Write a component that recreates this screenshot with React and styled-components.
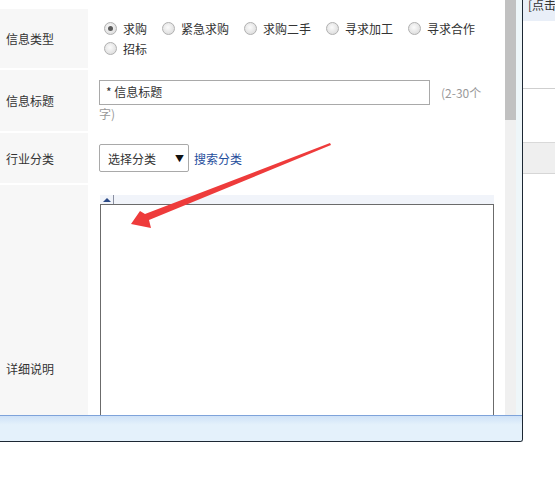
import React from "react";
import styled, { createGlobalStyle } from "styled-components";

const GlobalStyle = createGlobalStyle`
  html, body {
    margin: 0;
    padding: 0;
    background: #ffffff;
  }
  body {
    font-family: "Microsoft YaHei", "Noto Sans CJK SC", "Liberation Sans", sans-serif;
    font-size: 12px;
    color: #333333;
  }
`;

const Page = styled.div`
  position: relative;
  width: 555px;
  height: 501px;
  overflow: hidden;
  display: flex;
  align-items: flex-start;
`;

const Dialog = styled.div`
  width: 523px;
  height: 442px;
  display: flex;
  flex-direction: column;
  border-right: 1px solid #1c2733;
  border-bottom: 1px solid #1c2733;
  border-bottom-right-radius: 3px;
  box-sizing: border-box;
  overflow: hidden;
  flex-shrink: 0;
`;

const Body = styled.div`
  height: 415px;
  display: flex;
  overflow: hidden;
`;

const FormArea = styled.div`
  width: 505px;
  padding-top: 9px;
  display: grid;
  grid-template-columns: 88px 1fr;
  grid-auto-rows: min-content;
  row-gap: 2px;
  align-content: start;
`;

const Label = styled.div`
  background: #f7f7f7;
  height: ${(p) => p.h}px;
  display: flex;
  align-items: ${(p) => (p.bottom ? "flex-end" : "center")};
  padding-left: 6px;
  padding-bottom: ${(p) => (p.bottom ? "48px" : "0")};
  box-sizing: border-box;
  color: #333;
`;

const Cell = styled.div`
  padding: ${(p) => p.pad || "0 0 0 11px"};
  box-sizing: border-box;
  height: ${(p) => p.h}px;
`;

const RadioLine = styled.div`
  display: flex;
  align-items: center;
  height: 20px;
  padding-left: 5px;
`;

const RadioItem = styled.label`
  display: flex;
  align-items: center;
  margin-right: 15px;
  white-space: nowrap;
`;

const RadioDot = styled.span`
  width: 11px;
  height: 11px;
  border-radius: 50%;
  border: 1px solid #b0b0b0;
  background: radial-gradient(circle at 45% 40%, #fbfbfb 0%, #d6d6d6 100%);
  margin-right: 6px;
  position: relative;
  flex-shrink: 0;
  &::after {
    content: "";
    display: ${(p) => (p.checked ? "block" : "none")};
    position: absolute;
    left: 3px;
    top: 3px;
    width: 5px;
    height: 5px;
    border-radius: 50%;
    background: #5a5a5a;
  }
`;

const TitleWrap = styled.div`
  line-height: 18px;
`;

const TitleInput = styled.div`
  display: inline-block;
  width: 331px;
  height: 25px;
  border: 1px solid #a9a9a9;
  box-sizing: border-box;
  padding-left: 6px;
  line-height: 22px;
  vertical-align: top;
  color: #333;
`;

const Hint = styled.span`
  color: #999;
  margin-left: 11px;
  line-height: 25px;
`;

const HintWrap = styled.div`
  color: #999;
  line-height: 18px;
`;

const SelectRow = styled.div`
  display: flex;
  align-items: center;
`;

const Select = styled.div`
  width: 90px;
  height: 28px;
  border: 1px solid #a9a9a9;
  border-radius: 2px;
  box-sizing: border-box;
  display: flex;
  align-items: center;
  justify-content: space-between;
  padding: 0 4px 0 8px;
  background: #fff;
  font-size: 12px;
`;

const Caret = styled.span`
  font-size: 9px;
  color: #111;
`;

const SearchLink = styled.a`
  color: #1f4e9c;
  margin-left: 5px;
  text-decoration: none;
`;

const Editor = styled.div`
  width: 394px;
  display: flex;
  flex-direction: column;
`;

const EditorToolbar = styled.div`
  height: 9px;
  background: #f1f4fa;
  display: flex;
  align-items: flex-end;
  border-bottom: 1px solid #6b6b6b;
`;

const ToolBtn = styled.span`
  width: 13px;
  height: 9px;
  border-right: 1px solid #8a8fa0;
  display: flex;
  justify-content: center;
  align-items: center;
  &::before {
    content: "";
    border-left: 4px solid transparent;
    border-right: 4px solid transparent;
    border-bottom: 4px solid #2c4a86;
  }
`;

const EditorArea = styled.div`
  height: 240px;
  border-left: 1px solid #6b6b6b;
  border-right: 1px solid #6b6b6b;
  background: #fff;
`;

const Scrollbar = styled.div`
  width: 11px;
  background: #f0f0f0;
  display: flex;
  flex-direction: column;
  margin-left: 1px;
`;

const Thumb = styled.div`
  height: 120px;
  background: #c1c1c1;
`;

const Gutter = styled.div`
  width: 6px;
  background: #eef6f9;
`;

const Footer = styled.div`
  flex: 1;
  border-top: 1px solid #7ea3da;
  background: linear-gradient(#cfe2f7 0%, #e4f1fb 35%, #e4f1fb 100%);
`;

const SidePanel = styled.div`
  flex: 1;
  display: flex;
  flex-direction: column;
  background: #fff;
  overflow: hidden;
`;

const SideHead = styled.div`
  height: 21px;
  background: #e9eff8;
  line-height: 9px;
  padding-left: 5px;
  white-space: nowrap;
  overflow: hidden;
  color: #333;
`;

const SideRow = styled.div`
  height: ${(p) => p.h}px;
  border-bottom: 1px solid ${(p) => p.line};
  background: ${(p) => p.bg || "#fff"};
`;

const ArrowLayer = styled.svg`
  position: absolute;
  left: 0;
  top: 0;
  pointer-events: none;
`;

const radios = [
  ["求购", true],
  ["紧急求购", false],
  ["求购二手", false],
  ["寻求加工", false],
  ["寻求合作", false],
];

export default function App() {
  return (
    <>
      <GlobalStyle />
      <Page>
        <Dialog>
          <Body>
            <FormArea>
              <Label h={59}>信息类型</Label>
              <Cell h={59} pad="9px 0 0 11px">
                <RadioLine>
                  {radios.map(([text, on]) => (
                    <RadioItem key={text}>
                      <RadioDot checked={on} />
                      {text}
                    </RadioItem>
                  ))}
                </RadioLine>
                <RadioLine>
                  <RadioItem>
                    <RadioDot />
                    招标
                  </RadioItem>
                </RadioLine>
              </Cell>

              <Label h={61}>信息标题</Label>
              <Cell h={61} pad="10px 0 0 11px">
                <TitleWrap>
                  <TitleInput>* 信息标题</TitleInput>
                  <Hint>(2-30个</Hint>
                </TitleWrap>
                <HintWrap>字)</HintWrap>
              </Cell>

              <Label h={50}>行业分类</Label>
              <Cell h={50} pad="11px 0 0 11px">
                <SelectRow>
                  <Select>
                    选择分类
                    <Caret>▼</Caret>
                  </Select>
                  <SearchLink href="#">搜索分类</SearchLink>
                </SelectRow>
              </Cell>

              <Label h={240} bottom>
                详细说明
              </Label>
              <Cell h={240} pad="10px 0 0 12px">
                <Editor>
                  <EditorToolbar>
                    <ToolBtn />
                  </EditorToolbar>
                  <EditorArea />
                </Editor>
              </Cell>
            </FormArea>
            <Scrollbar>
              <Thumb />
            </Scrollbar>
            <Gutter />
          </Body>
          <Footer />
        </Dialog>
        <SidePanel>
          <SideHead>[点击</SideHead>
          <SideRow h={67} line="#cfcfcf" />
          <SideRow h={53} line="#d9d9d9" />
          <SideRow h={30} line="#d6d6d6" bg="#efefef" />
        </SidePanel>
        <ArrowLayer width="555" height="501" viewBox="0 0 555 501">
          <polygon
            points="131,224 140,211 145,214 330,143 331,145 149,220 151,228"
            fill="#ee3b3b"
          />
        </ArrowLayer>
      </Page>
    </>
  );
}
